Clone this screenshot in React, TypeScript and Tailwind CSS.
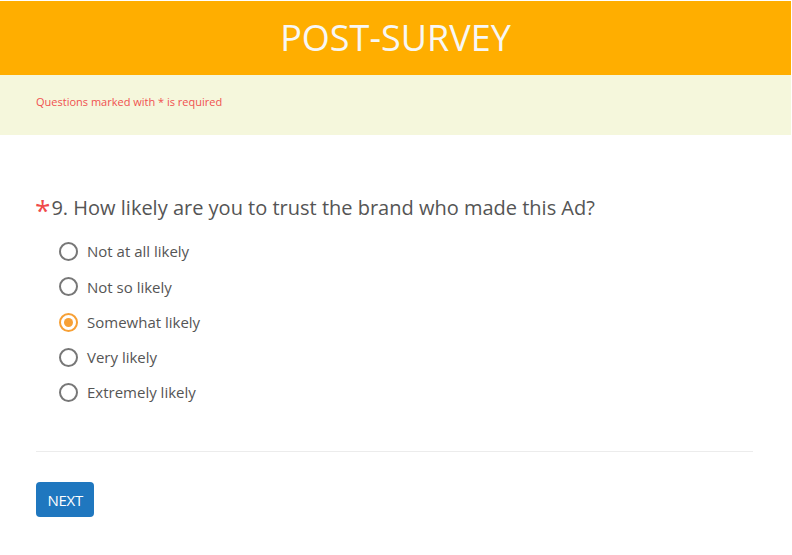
import React, { useState } from 'react';

const options = ['Not at all likely', 'Not so likely', 'Somewhat likely', 'Very likely', 'Extremely likely'];

export default function App() {
  const [selected, setSelected] = useState(2);

  return (
    <div className="w-[792px] h-[555px] bg-white pt-px pr-px font-['Open_Sans',sans-serif] overflow-hidden">
      {/* Title bar */}
      <header className="h-[74px] bg-[#ffae00] flex items-center justify-center">
        <h1 className="text-[36px] text-[#f7f7f5] leading-none -mt-[1px]">POST-SURVEY</h1>
      </header>

      {/* Notice */}
      <div className="h-[60px] bg-[#f5f7dc] flex items-center px-9">
        <p className="text-[11px] text-[#f0504f] -mt-[5px]">Questions marked with * is required</p>
      </div>

      <main className="px-9">
        <h2 className="mt-[58px] flex items-start text-[20px] text-[#555] leading-[30px]">
          <span className="text-[#f04a4a] text-[28px] leading-[30px] mr-[1px] -ml-[1px] mt-[2px]">*</span>
          9. How likely are you to trust the brand who made this Ad?
        </h2>

        <div className="mt-[9px] pl-[23px] flex flex-col">
          {options.map((label, i) => {
            const active = i === selected;
            return (
              <label key={label} className="h-[35.25px] flex items-center gap-[9px] cursor-pointer" onClick={() => setSelected(i)}>
                <span
                  className={
                    active
                      ? 'w-[19px] h-[19px] rounded-full border-2 border-[#f7a035] flex items-center justify-center'
                      : 'w-[19px] h-[19px] rounded-full border-2 border-[#777]'
                  }
                >
                  {active && <span className="w-[9px] h-[9px] rounded-full bg-[#f7a035]" />}
                </span>
                <span className="text-[15px] text-[#555]">{label}</span>
              </label>
            );
          })}
        </div>

        <hr className="mt-[41px] mr-[2px] border-t border-[#ececec]" />

        <button className="mt-[30px] h-[35px] px-[11.5px] rounded-[4px] bg-[#1f77bf] text-white text-[15px] tracking-[-0.3px]">
          NEXT
        </button>
      </main>
    </div>
  );
}
